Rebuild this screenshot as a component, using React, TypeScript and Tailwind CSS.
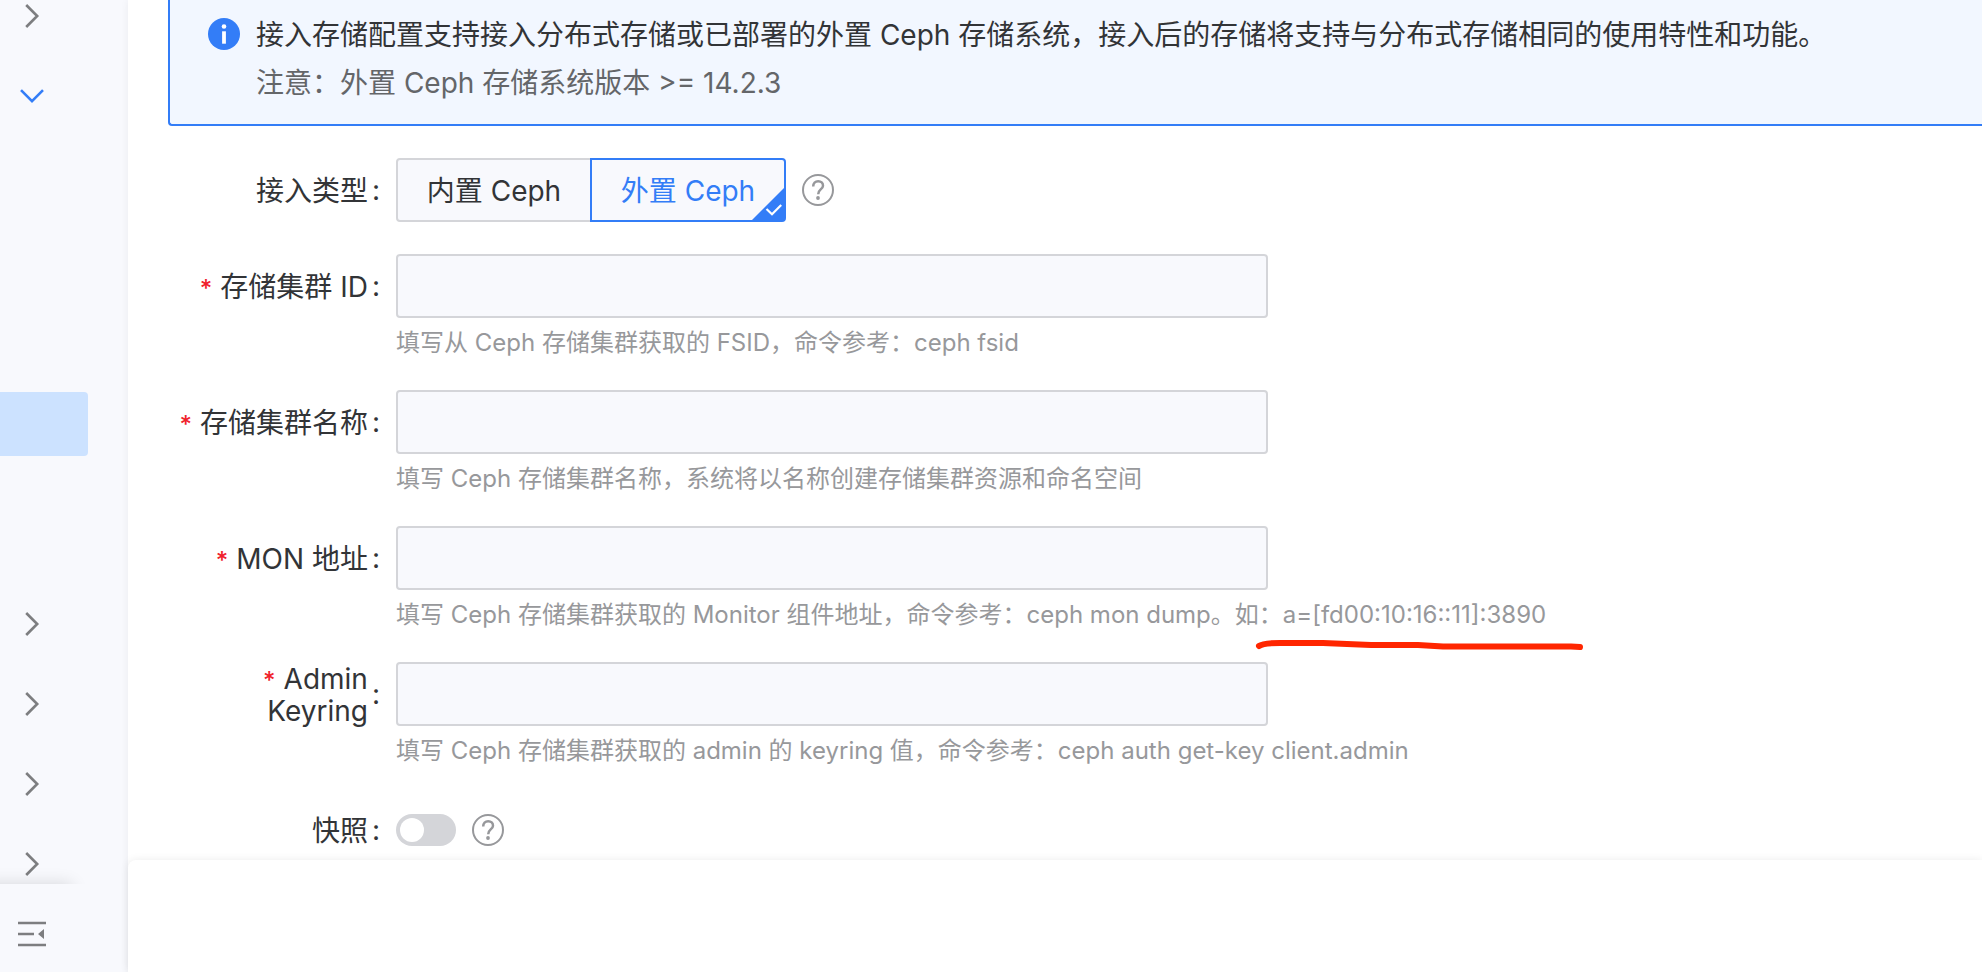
import { useState, type ReactNode } from "react";

const FONT = "font-[Inter,'Noto_Sans_CJK_SC',sans-serif]";

function Chevron({ open = false }: { open?: boolean }) {
  return (
    <svg width="32" height="32" viewBox="0 0 32 32" fill="none" strokeWidth="2.6" aria-hidden="true"
      className={open ? "stroke-[#337df7]" : "stroke-[#7d7e80]"}>
      <path d={open ? "M5 10.2 16 21.2 27 10.2" : "M10.2 5 21.2 16 10.2 27"} />
    </svg>
  );
}

function MenuGroup({ label, open = false }: { label: string; open?: boolean }) {
  return (
    <button type="button" aria-label={label} aria-expanded={open} className="flex h-20 w-full shrink-0 items-center pl-4">
      <Chevron open={open} />
    </button>
  );
}

function Sidebar() {
  return (
    <aside className="flex w-32 shrink-0 flex-col bg-[#f8f9fd]">
      <nav className="-mt-6 flex min-h-0 flex-1 flex-col overflow-hidden">
        <MenuGroup label="概览" />
        <MenuGroup label="存储" open />
        <ul className="shrink-0">
          {[0, 1, 2, 3, 4, 5, 6].map((i) => (
            <li key={i} className={i === 4 ? "h-16 w-[88px] rounded-r bg-[#cce2ff]" : "h-16 w-[88px]"} />
          ))}
        </ul>
        <MenuGroup label="网络" />
        <MenuGroup label="监控" />
        <MenuGroup label="用户" />
        <MenuGroup label="系统" />
      </nav>
      <div className="relative -ml-4 h-[88px] w-[104px] bg-[#f8f9fd] shadow-[-8px_-8px_16px_-8px_rgba(0,0,0,0.14)]">
        <button type="button" aria-label="收起菜单" className="flex h-full items-center pt-3 pl-8">
          <svg width="32" height="32" viewBox="0 0 32 32" fill="#7d7e80" aria-hidden="true">
            <path d="M2 3.7h28v2.6H2zM2 14.7h16v2.6H2zM2 25.7h28v2.6H2zM22 16l6-5v10z" />
          </svg>
        </button>
      </div>
    </aside>
  );
}

function HelpIcon() {
  return (
    <button type="button" aria-label="帮助" className="shrink-0">
      <svg width="32" height="32" viewBox="0 0 32 32" fill="none" stroke="#97989b" strokeWidth="2" aria-hidden="true">
        <circle cx="16" cy="16" r="15" />
        <path d="M11.2 12.6C11.2 9.3 13.3 7.2 16.2 7.2S21 9.1 21 11.7C21 15.2 16.2 15.2 16.2 20.2" strokeWidth="2.5" />
        <circle cx="16" cy="24" r="1.9" fill="#97989b" stroke="none" />
      </svg>
    </button>
  );
}

function Caption({ text, required }: { text: string; required?: boolean }) {
  return (
    <>
      <span className="pt-0.5 text-right leading-8">
        {required && <span className="mr-2 text-2xl leading-none font-medium text-[#f0222b]">*</span>}
        {text}
      </span>
      <span className="ml-1">:</span>
    </>
  );
}

const CAPTION = "flex h-16 w-[228px] shrink-0 items-center justify-end pr-4";

function Field({ id, label, children }: { id: string; label: string; children: ReactNode }) {
  return (
    <div className="flex">
      <label htmlFor={id} className={CAPTION}>
        <Caption text={label} required />
      </label>
      <div className="min-w-0 flex-1">
        <input
          id={id}
          type="text"
          required
          className="block h-16 w-full max-w-[872px] rounded border-2 border-[#d4d5d9] bg-[#f8f9fd] px-4 outline-none focus:border-[#337df7]"
        />
        <p className="h-[72px] pt-[5px] text-2xl leading-10 text-[#97989b]">{children}</p>
      </div>
    </div>
  );
}

function Underline() {
  return (
    <svg className="absolute top-[38px] -left-[30px] h-4 w-[332px]" viewBox="0 0 332 16" fill="none" stroke="#ff2600"
      strokeWidth="6" strokeLinecap="round" strokeLinejoin="round" aria-hidden="true">
      <path d="M6 8Q10 5 27 5H70L118 7H165L190 8.500H318L327 9" />
    </svg>
  );
}

const TYPES = ["内置 Ceph", "外置 Ceph"];

export default function App() {
  const [type, setType] = useState(TYPES[1]);
  const [snapshot, setSnapshot] = useState(false);

  return (
    <div className={`flex h-screen overflow-hidden bg-white text-[28px] text-[#323437] ${FONT}`}>
      <Sidebar />
      <main className="relative flex min-w-0 flex-1 flex-col bg-white shadow-[0_0_8px_rgba(0,0,0,0.06)]">
        <div className="min-h-0 flex-1 overflow-hidden pl-10">
          <div className="flex gap-4 rounded-bl border-b-2 border-l-2 border-[#337df7] bg-[#f2f7ff] pt-[11px] pb-[17px] pl-[38px] leading-[48px]">
            <svg className="mt-[7px] shrink-0" width="32" height="32" viewBox="0 0 32 32" aria-hidden="true">
              <circle cx="16" cy="16" r="16" fill="#337df7" />
              <circle cx="16" cy="8.500" r="2.300" fill="#fff" />
              <path d="M14.100 13.300h3.800v12.400h-3.800z" fill="#fff" />
            </svg>
            <div>
              <p>接入存储配置支持接入分布式存储或已部署的外置 Ceph 存储系统，接入后的存储将支持与分布式存储相同的使用特性和功能。</p>
              <p className="text-[#646669]">注意：外置 Ceph 存储系统版本 &gt;= 14.2.3</p>
            </div>
          </div>

          <form className="pt-8">
            <div className="mb-8 flex items-center">
              <div id="type-caption" className={CAPTION}>
                <Caption text="接入类型" />
              </div>
              <div role="radiogroup" aria-labelledby="type-caption" className="mr-4 flex">
                {TYPES.map((name) => (
                  <label
                    key={name}
                    className={
                      "relative flex h-16 w-[196px] cursor-pointer items-center justify-center border-2 bg-[#f8f9fd] pt-0.5 whitespace-nowrap first:rounded-l last:-ml-0.5 last:rounded-r " +
                      (name === type ? "z-10 border-[#337df7] text-[#337df7]" : "border-[#d4d5d9]")
                    }
                  >
                    <input type="radio" name="type" className="sr-only" checked={name === type} onChange={() => setType(name)} />
                    {name}
                    {name === type && (
                      <svg className="absolute right-0 bottom-0" width="32" height="32" viewBox="0 0 32 32" aria-hidden="true">
                        <path d="M32 0v32H0z" fill="#337df7" />
                        <path d="m14.500 21 5.500 5.200 9.200-9.200" fill="none" stroke="#fff" strokeWidth="2.200" />
                      </svg>
                    )}
                  </label>
                ))}
              </div>
              <HelpIcon />
            </div>

            <Field id="fsid" label="存储集群 ID">填写从 Ceph 存储集群获取的 FSID，命令参考：ceph fsid</Field>
            <Field id="name" label="存储集群名称">填写 Ceph 存储集群名称，系统将以名称创建存储集群资源和命名空间</Field>
            <Field id="mon" label="MON 地址">
              填写 Ceph 存储集群获取的 Monitor 组件地址，命令参考：ceph mon dump。如：
              <span className="relative">
                a=[fd00:10:16::11]:3890
                <Underline />
              </span>
            </Field>
            <Field id="keyring" label="Admin Keyring">填写 Ceph 存储集群获取的 admin 的 keyring 值，命令参考：ceph auth get-key client.admin</Field>

            <div className="flex items-center">
              <label htmlFor="snapshot" className={CAPTION}>
                <Caption text="快照" />
              </label>
              <input
                id="snapshot"
                type="checkbox"
                role="switch"
                checked={snapshot}
                onChange={(e) => setSnapshot(e.target.checked)}
                className="mr-4 flex h-8 w-[60px] appearance-none items-center rounded-full bg-[#d4d5d9] px-1 before:size-6 before:rounded-full before:bg-white checked:justify-end checked:bg-[#337df7]"
              />
              <HelpIcon />
            </div>
          </form>
        </div>
        <footer className="relative h-28 shrink-0 rounded-tl-lg bg-white shadow-[0_0_8px_rgba(0,0,0,0.08)]" />
      </main>
    </div>
  );
}
